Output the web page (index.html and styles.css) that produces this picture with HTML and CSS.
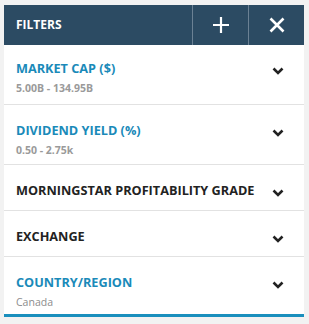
FILE: index.html
```html
<!DOCTYPE html>
<html lang="en">
<head>
    <meta charset="UTF-8">
    <meta name="viewport" content="width=device-width, initial-scale=1.0">
    <title>Filters</title>
    <link rel="stylesheet" href="styles.css">
</head>
<body>
    <div class="filter-panel">
        <div class="panel-header">
            <div class="panel-title">FILTERS</div>
            <button class="header-btn" title="Add filter">
                <svg width="18" height="18" viewBox="0 0 18 18"><path d="M9 1v16M1 9h16" stroke="#fff" stroke-width="2.2" fill="none"/></svg>
            </button>
            <button class="header-btn" title="Close">
                <svg width="16" height="16" viewBox="0 0 16 16"><path d="M1.5 1.5l13 13M14.5 1.5l-13 13" stroke="#fff" stroke-width="2.6" fill="none"/></svg>
            </button>
        </div>

        <div class="filter-row first">
            <div class="filter-line">
                <span class="filter-name active">MARKET CAP ($)</span>
                <svg class="chevron" width="12" height="8" viewBox="0 0 12 8"><path d="M1.5 1.5l4.5 4.5 4.5-4.5" stroke="#222" stroke-width="2.6" fill="none"/></svg>
            </div>
            <div class="filter-value">5.00B - 134.95B</div>
        </div>

        <div class="filter-row">
            <div class="filter-line">
                <span class="filter-name active">DIVIDEND YIELD (%)</span>
                <svg class="chevron" width="12" height="8" viewBox="0 0 12 8"><path d="M1.5 1.5l4.5 4.5 4.5-4.5" stroke="#222" stroke-width="2.6" fill="none"/></svg>
            </div>
            <div class="filter-value">0.50 - 2.75k</div>
        </div>

        <div class="filter-row">
            <div class="filter-line">
                <span class="filter-name">MORNINGSTAR PROFITABILITY GRADE</span>
                <svg class="chevron" width="12" height="8" viewBox="0 0 12 8"><path d="M1.5 1.5l4.5 4.5 4.5-4.5" stroke="#222" stroke-width="2.6" fill="none"/></svg>
            </div>
        </div>

        <div class="filter-row">
            <div class="filter-line">
                <span class="filter-name">EXCHANGE</span>
                <svg class="chevron" width="12" height="8" viewBox="0 0 12 8"><path d="M1.5 1.5l4.5 4.5 4.5-4.5" stroke="#222" stroke-width="2.6" fill="none"/></svg>
            </div>
        </div>

        <div class="filter-row last">
            <div class="filter-line">
                <span class="filter-name active">COUNTRY/REGION</span>
                <svg class="chevron" width="12" height="8" viewBox="0 0 12 8"><path d="M1.5 1.5l4.5 4.5 4.5-4.5" stroke="#222" stroke-width="2.6" fill="none"/></svg>
            </div>
            <div class="filter-value plain">Canada</div>
        </div>
    </div>
</body>
</html>
```
FILE: styles.css
```css
body {
    margin: 0;
    padding: 5px 5px 0 4px;
    background-color: #f2f2f2;
    font-family: "Open Sans", Arial, sans-serif;
}
.filter-panel {
    width: 300px;
    background-color: #fff;
    border-bottom: 3px solid #1a8fbd;
}
.panel-header {
    display: flex;
    height: 40px;
    background-color: #2c4b63;
}
.panel-title {
    flex: 1;
    padding-left: 12px;
    line-height: 40px;
    color: #fff;
    font-size: 12px;
    font-weight: 700;
}
.header-btn {
    width: 56px;
    height: 40px;
    padding: 0;
    border: none;
    border-left: 1px solid #6b8194;
    background: none;
    display: flex;
    align-items: center;
    justify-content: center;
    cursor: pointer;
}
.filter-row {
    padding: 17px 20px 12px 12px;
    border-bottom: 1px solid #e2e2e2;
}
.filter-row.first {
    padding-top: 15px;
    padding-bottom: 14px;
}
.filter-row.last {
    padding-bottom: 10px;
    border-bottom: none;
}
.filter-line {
    display: flex;
    align-items: center;
    justify-content: space-between;
    height: 16px;
}
.filter-name {
    font-size: 12.7px;
    font-weight: 700;
    color: #222;
}
.filter-name.active {
    color: #1a8ab9;
}
.chevron {
    margin-top: 6px;
}
.filter-value {
    margin: 5px 0 -6px;
    line-height: 15px;
    font-size: 10.5px;
    font-weight: 700;
    color: #9a9a9a;
}
.filter-value.plain {
    font-weight: 400;
    color: #8c8c8c;
}
```
